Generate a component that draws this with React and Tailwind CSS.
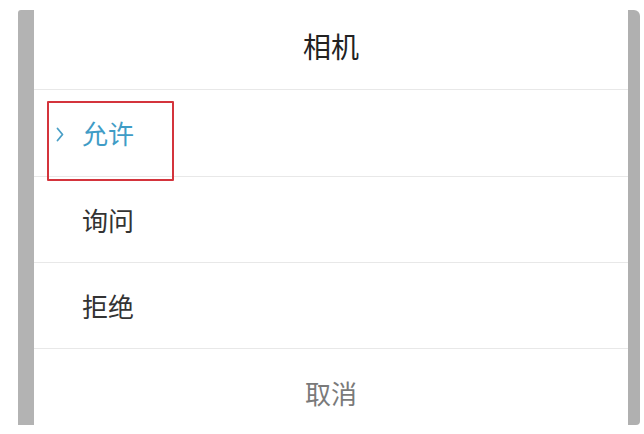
// App.jsx — permission picker dialog (相机)

const font = { fontFamily: '"Noto Sans CJK SC", "Noto Sans", sans-serif' }

function Row({ children, className = '' }) {
  return (
    <div className={`relative flex items-center border-b border-[#e8e8e8] pl-[48px] ${className}`}>
      {children}
    </div>
  )
}

export default function App() {
  return (
    <div className="w-[644px] h-[434px] bg-white overflow-hidden" style={font}>
      <div className="flex pt-[10px] pl-[18px] pr-[4px] h-[425px]">
        {/* left edge of the sheet behind */}
        <div className="w-[16px] bg-[#b3b3b3] rounded-tl-[3px]" />

        {/* dialog */}
        <div className="flex-1 flex flex-col bg-white">
          <div className="h-[80px] flex items-center justify-center pb-[8px] border-b border-[#e8e8e8]">
            <span className="text-[28px] leading-none text-[#222]">相机</span>
          </div>

          <Row className="h-[87px]">
            <svg
              className="absolute left-[22px] top-[37px]"
              width="8"
              height="15"
              viewBox="0 0 8 15"
              fill="none"
            >
              <path d="M1.5 1.5 L6.5 7.5 L1.5 13.5" stroke="#4a9fc6" strokeWidth="1.8" strokeLinecap="round" strokeLinejoin="round" />
            </svg>
            <span className="text-[26px] leading-none text-[#3f9cc6]">允许</span>
            {/* annotation box */}
            <div className="absolute left-[13px] top-[11px] w-[127px] h-[80px] border-2 border-[#d4343c] rounded-[1px]" />
          </Row>

          <Row className="h-[86px]">
            <span className="text-[26px] leading-none text-[#333]">询问</span>
          </Row>

          <Row className="h-[86px]">
            <span className="text-[26px] leading-none text-[#333]">拒绝</span>
          </Row>

          <div className="flex-1 flex items-center justify-center pt-[12px]">
            <span className="text-[26px] leading-none text-[#7a7a7a]">取消</span>
          </div>
        </div>

        {/* right edge */}
        <div className="w-[12px] bg-[#b0b0b0] rounded-tr-[6px] rounded-br-[4px]" />
      </div>
    </div>
  )
}
